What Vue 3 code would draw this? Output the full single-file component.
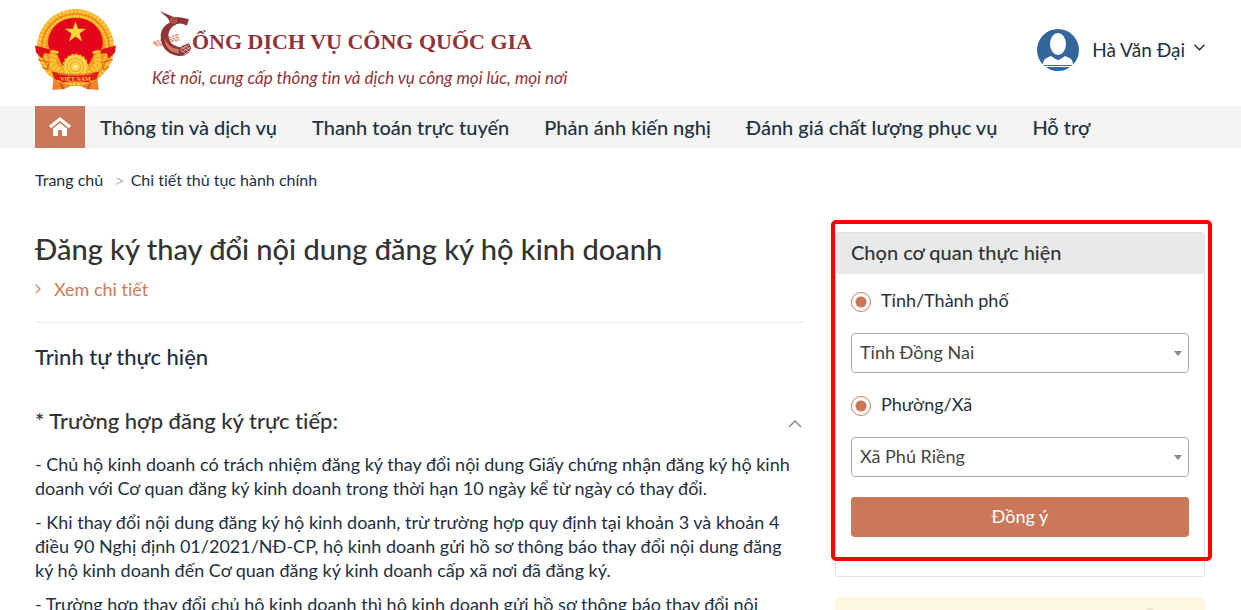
<template>
  <div class="page">
    <header class="header">
      <a href="#" class="brand">
        <svg class="emblem" viewBox="0 0 80 82" aria-hidden="true">
          <path d="M19 64 L61 64 L63 80 L51 79 L45 76 L35 76 L29 79 L17 80 Z" fill="#f0822c" />
          <path d="M22 66 L28 79 M58 66 L52 79" stroke="#d9531e" stroke-width="2" />
          <circle cx="40" cy="38" r="38" fill="#f39a22" />
          <circle cx="40" cy="38" r="36" fill="none" stroke="#fbcf3a" stroke-width="3" stroke-dasharray="3 1" />
          <circle cx="40" cy="38" r="33" fill="none" stroke="#ef7d1d" stroke-width="1" stroke-dasharray="2 2" />
          <circle cx="40" cy="38" r="31" fill="none" stroke="#fbd73f" stroke-width="2" stroke-dasharray="2 1" />
          <path d="M40 9 C57 9 67 21 67 34 C67 40 63 41 58 46 C55 50 55 54 51 57 H29 C25 54 25 50 22 46 C17 41 13 40 13 34 C13 21 23 9 40 9 Z" fill="#e3051b" />
          <path d="M20 41 L17 54 L26 64 M60 41 L63 54 L54 64" fill="none" stroke="#f8c431" stroke-width="7" stroke-dasharray="3 1" />
          <path d="M0 36 L15 40 L15 44 L9 44 L7 49 L1 43 Z M80 36 L65 40 L65 44 L71 44 L73 49 L79 43 Z" fill="#dd101b" />
          <path d="M3 50 L14 53 L12 60 L7 57 M77 50 L66 53 L68 60 L73 57" fill="none" stroke="#e4581d" stroke-width="1" />
          <polygon points="40,12 42.5,19.5 50.5,19.5 44,24.2 46.5,32 40,27.2 33.5,32 36,24.2 29.5,19.5 37.5,19.5" fill="#fcd938" />
          <circle cx="40" cy="57" r="12" fill="#fbd24a" stroke="#f9b52c" stroke-width="2" stroke-dasharray="2 2" />
          <circle cx="40" cy="57" r="8" fill="none" stroke="#eea32b" stroke-width="1" />
          <circle cx="40" cy="57" r="5" fill="none" stroke="#eea32b" stroke-width="1" />
          <circle cx="40" cy="57" r="2" fill="#fff0a0" />
          <path d="M16 61 L24 63 Q40 66 56 63 L64 61 L61 70 L56 71 L53 73 Q40 71 27 73 L24 71 L19 70 Z" fill="#e11a1b" stroke="#f5a226" stroke-width="1" />
          <path d="M23 64 Q40 67 57 64" fill="none" stroke="#f9c845" stroke-width="1" stroke-dasharray="1 1" />
          <text x="40" y="71" text-anchor="middle" class="emblem-text">VIỆT NAM</text>
        </svg>
        <div class="brand-text">
          <div class="brand-title">
            <svg class="brand-bird" viewBox="21 36 120 144" aria-hidden="true">
              <path d="M24 134 L50 125 M27 138 L52 133 M32 143 L54 140 M70 120 L102 109 M72 126 L104 117 M78 130 L104 125" stroke="#dd9b7c" stroke-width="5" stroke-dasharray="9 2" />
              <path d="M44 39 L84 56 Q110 56 132 64 L125 83 Q111 74 96 78 Q74 86 70 110 Q70 138 100 147 Q108 149 111 143 L132 136 L139 151 Q134 166 119 172 Q94 178 69 162 Q46 145 47 111 Q49 87 75 73 L68 60 Z" fill="#8f3438" />
              <path d="M60 121 Q67 149 101 154 L101 166 Q73 163 61 139 Z" fill="#cf7d61" />
              <path d="M108 146 L134 162 M112 140 L138 155 M105 155 L125 169 M107 154 L132 141 M110 162 L137 147 M118 169 L138 156" stroke="#f3d8cf" stroke-width="2" />
              <circle cx="86" cy="67" r="8" fill="#8f3438" stroke="#b86450" stroke-width="4" />
              <circle cx="86" cy="67" r="2" fill="#f3d8cf" />
            </svg>
            <span>ỔNG DỊCH VỤ CÔNG QUỐC GIA</span>
          </div>
          <div class="brand-slogan">Kết nối, cung cấp thông tin và dịch vụ công mọi lúc, mọi nơi</div>
        </div>
      </a>
      <button type="button" class="user">
        <svg class="avatar" viewBox="0 0 42 42" aria-hidden="true">
          <circle cx="21" cy="21" r="21" fill="#336699" />
          <ellipse cx="21" cy="15" rx="8" ry="11" fill="#fff" />
          <path d="M6 36 C6 30 9 29 14 27 Q18 30 21 31 Q24 30 28 27 C33 29 36 30 36 36 Z" fill="#fff" />
          <path d="M18 28 L21 31 L24 28 Z" fill="#336699" />
          <path d="M8 37.5 H34" stroke="#fff" stroke-width="1" />
        </svg>
        <span>Hà Văn Đại</span>
        <svg class="user-arrow" viewBox="0 0 10 6" aria-hidden="true">
          <path d="M0.5 0.5 L5 5 L9.5 0.5" fill="none" stroke="#1e2f41" stroke-width="1.3" />
        </svg>
      </button>
    </header>

    <nav class="nav">
      <a href="#" class="nav-home" aria-label="Trang chủ">
        <svg viewBox="0 0 22 20" aria-hidden="true">
          <path d="M1 10 L11 2 L21 10" fill="none" stroke="#fff" stroke-width="3" />
          <path d="M4 11.5 L11 6 L18 11.5 V19 H13 V13 H9 V19 H4 Z" fill="#fff" />
        </svg>
      </a>
      <a v-for="item in menu" :key="item" href="#" class="nav-link">{{ item }}</a>
    </nav>

    <div class="breadcrumb">
      <a href="#">Trang chủ</a>
      <span class="separator">&gt;</span>
      <span>Chi tiết thủ tục hành chính</span>
    </div>

    <div class="content">
      <main>
        <h1 class="title">Đăng ký thay đổi nội dung đăng ký hộ kinh doanh</h1>
        <a href="#" class="detail-link">
          <svg viewBox="0 0 6 10" aria-hidden="true">
            <path d="M0.7 0.7 L5 5 L0.7 9.3" fill="none" stroke="#ce7a58" stroke-width="1.2" />
          </svg>
          <span>Xem chi tiết</span>
        </a>
        <h2 class="section-title">Trình tự thực hiện</h2>
        <button type="button" class="collapse" :aria-expanded="expanded" @click="expanded = !expanded">
          <span>* Trường hợp đăng ký trực tiếp:</span>
          <svg viewBox="0 0 14 8" :class="{ closed: !expanded }" aria-hidden="true">
            <path d="M1 7 L7 1 L13 7" fill="none" stroke="#848b9c" stroke-width="1.5" />
          </svg>
        </button>
        <div v-if="expanded" class="steps">
          <p v-for="(step, index) in steps" :key="index">{{ step }}</p>
        </div>
      </main>

      <aside>
        <form class="agency" @submit.prevent>
          <h3 class="agency-title">Chọn cơ quan thực hiện</h3>
          <div class="agency-body">
            <label class="radio">
              <input type="radio" name="province" checked />
              <span>Tỉnh/Thành phố</span>
            </label>
            <div class="select">
              <select v-model="province" aria-label="Tỉnh/Thành phố">
                <option>Tỉnh Đồng Nai</option>
              </select>
            </div>
            <label class="radio">
              <input type="radio" name="ward" checked />
              <span>Phường/Xã</span>
            </label>
            <div class="select">
              <select v-model="ward" aria-label="Phường/Xã">
                <option>Xã Phú Riềng</option>
              </select>
            </div>
            <button type="submit" class="submit">Đồng ý</button>
          </div>
          <div class="highlight"></div>
        </form>
        <div class="notice">
          <svg viewBox="0 0 30 30" aria-hidden="true">
            <path d="M15 0 L28 9 V30 H2 V9 Z" fill="#efe6d2" />
          </svg>
        </div>
      </aside>
    </div>
  </div>
</template>

<script setup>
import { ref } from 'vue'

const menu = [
  'Thông tin và dịch vụ',
  'Thanh toán trực tuyến',
  'Phản ánh kiến nghị',
  'Đánh giá chất lượng phục vụ',
  'Hỗ trợ'
]

const steps = [
  '- Chủ hộ kinh doanh có trách nhiệm đăng ký thay đổi nội dung Giấy chứng nhận đăng ký hộ kinh doanh với Cơ quan đăng ký kinh doanh trong thời hạn 10 ngày kể từ ngày có thay đổi.',
  '- Khi thay đổi nội dung đăng ký hộ kinh doanh, trừ trường hợp quy định tại khoản 3 và khoản 4 điều 90 Nghị định 01/2021/NĐ-CP, hộ kinh doanh gửi hồ sơ thông báo thay đổi nội dung đăng ký hộ kinh doanh đến Cơ quan đăng ký kinh doanh cấp xã nơi đã đăng ký.',
  '- Trường hợp thay đổi chủ hộ kinh doanh thì hộ kinh doanh gửi hồ sơ thông báo thay đổi nội'
]

const expanded = ref(true)
const province = ref('Tỉnh Đồng Nai')
const ward = ref('Xã Phú Riềng')
</script>

<style>
body {
  margin: 0;
  background: #fff;
}
</style>

<style scoped>
.page {
  height: 100vh;
  overflow: hidden;
  font-family: Lato, "Noto Sans", sans-serif;
  font-size: 18px;
  font-variant-ligatures: none;
  line-height: 24px;
  color: #1e2f41;
}

.page * {
  box-sizing: border-box;
}

a {
  color: inherit;
  text-decoration: none;
}

button,
select {
  font: inherit;
  font-variant-ligatures: none;
  color: inherit;
  cursor: pointer;
}

h1,
h2,
h3,
p {
  margin: 0;
  font-weight: 500;
}

.header {
  display: flex;
  justify-content: space-between;
  align-items: center;
  height: 106px;
  padding: 0 36px 6px 35px;
}

.brand {
  display: flex;
  align-items: center;
  gap: 36px;
  color: #8f3438;
}

.emblem {
  width: 81px;
  height: 83px;
}

.emblem-text {
  font-family: "Liberation Serif", serif;
  font-size: 6px;
  font-weight: bold;
  fill: #f9c845;
}

.brand-title {
  display: flex;
  align-items: flex-start;
  font-family: "Liberation Serif", serif;
  font-size: 22px;
  font-weight: bold;
  white-space: nowrap;
}

.brand-title span {
  padding-top: 20px;
}

.brand-bird {
  width: 40px;
  height: 48px;
  margin-bottom: 8px;
}

.brand-slogan {
  font-size: 17px;
  font-style: italic;
}

.user {
  display: flex;
  align-items: center;
  gap: 13px;
  padding: 0;
  border: 0;
  background: none;
  font-size: 19px;
}

.avatar {
  width: 42px;
  height: 42px;
}

.user-arrow {
  width: 11px;
  height: 7px;
  margin: 0 0 5px -4px;
}

.nav {
  display: flex;
  gap: 5px;
  height: 42px;
  padding: 0 35px;
  background: #f4f4f4;
}

.nav-home {
  display: flex;
  align-items: center;
  justify-content: center;
  width: 50px;
  margin-right: -5px;
  background: #cb785a;
}

.nav-home svg {
  width: 22px;
  height: 20px;
}

.nav-link {
  padding: 0 15px;
  font-size: 20px;
  font-weight: 500;
  line-height: 42px;
  white-space: nowrap;
}

.breadcrumb {
  display: flex;
  gap: 11px;
  padding: 20px 35px 0;
  font-size: 16px;
}

.separator {
  margin-right: -5px;
  font-size: 18px;
  color: #bbb;
}

.content {
  display: grid;
  grid-template-columns: minmax(0, 1fr) 370px;
  gap: 30px;
  padding: 40px 36px 0 35px;
}

.title {
  font-size: 29px;
  line-height: 34px;
  color: #333;
}

.detail-link {
  display: flex;
  align-items: center;
  gap: 13px;
  padding: 11px 0 21px;
  border-bottom: 1px solid #e6edf2;
  color: #ce7a58;
}

.detail-link svg {
  width: 6px;
  height: 10px;
}

.section-title {
  padding-top: 19px;
  font-size: 22px;
  line-height: 30px;
}

.collapse {
  display: flex;
  justify-content: space-between;
  align-items: center;
  width: 100%;
  margin: 34px 0 16px;
  padding: 0 3px 0 0;
  border: 0;
  background: none;
  font-size: 22px;
  font-weight: 500;
  line-height: 30px;
  color: #333;
}

.collapse svg {
  width: 14px;
  height: 8px;
  margin-top: 6px;
}

.collapse .closed {
  transform: rotate(180deg);
}

.steps p {
  margin-bottom: 10px;
  padding-right: 6px;
  font-weight: 400;
}

.agency {
  position: relative;
  border: 1px solid #dee0e2;
  border-radius: 3px;
}

.agency-title {
  padding: 0 15px 3px;
  font-size: 20px;
  line-height: 38px;
  color: #333;
  background: #e8e9eb;
}

.agency-body {
  display: flex;
  flex-direction: column;
  gap: 20px;
  padding: 14px 15px 39px;
}

.radio {
  display: flex;
  align-items: center;
  gap: 10px;
}

.radio input {
  appearance: none;
  width: 20px;
  height: 20px;
  margin: 4px 0 0;
  border: 1px solid #cb785a;
  border-radius: 50%;
}

.radio input:checked {
  background: radial-gradient(circle, #cb785a 5px, #fff 6px);
}

.select {
  display: grid;
  align-items: center;
  margin-top: 1px;
}

.select select,
.select::after {
  grid-area: 1 / 1;
}

.select select {
  appearance: none;
  width: 100%;
  height: 40px;
  padding: 0 8px 2px;
  border: 1px solid #aaa;
  border-radius: 4px;
  background: #fff;
  color: #444;
}

.select + .radio {
  margin-top: -1px;
}

.select::after {
  content: "";
  justify-self: end;
  width: 0;
  margin-right: 7px;
  border: 4px solid transparent;
  border-top: 5px solid #888;
  border-bottom: 0;
  pointer-events: none;
}

.submit {
  height: 40px;
  padding-bottom: 3px;
  border: 0;
  border-radius: 4px;
  background: #cb785a;
  color: #fff;
}

/* red frame drawn over the agency form */
.highlight {
  position: absolute;
  top: -13px;
  right: -8px;
  bottom: 15px;
  left: -5px;
  border: 4px solid #f00;
  border-radius: 5px;
  pointer-events: none;
}

.notice {
  display: flex;
  justify-content: flex-end;
  height: 120px;
  margin-top: 20px;
  padding: 10px 40px;
  border-radius: 4px;
  background: #fef6e0;
}

.notice svg {
  width: 30px;
  height: 30px;
}
</style>
